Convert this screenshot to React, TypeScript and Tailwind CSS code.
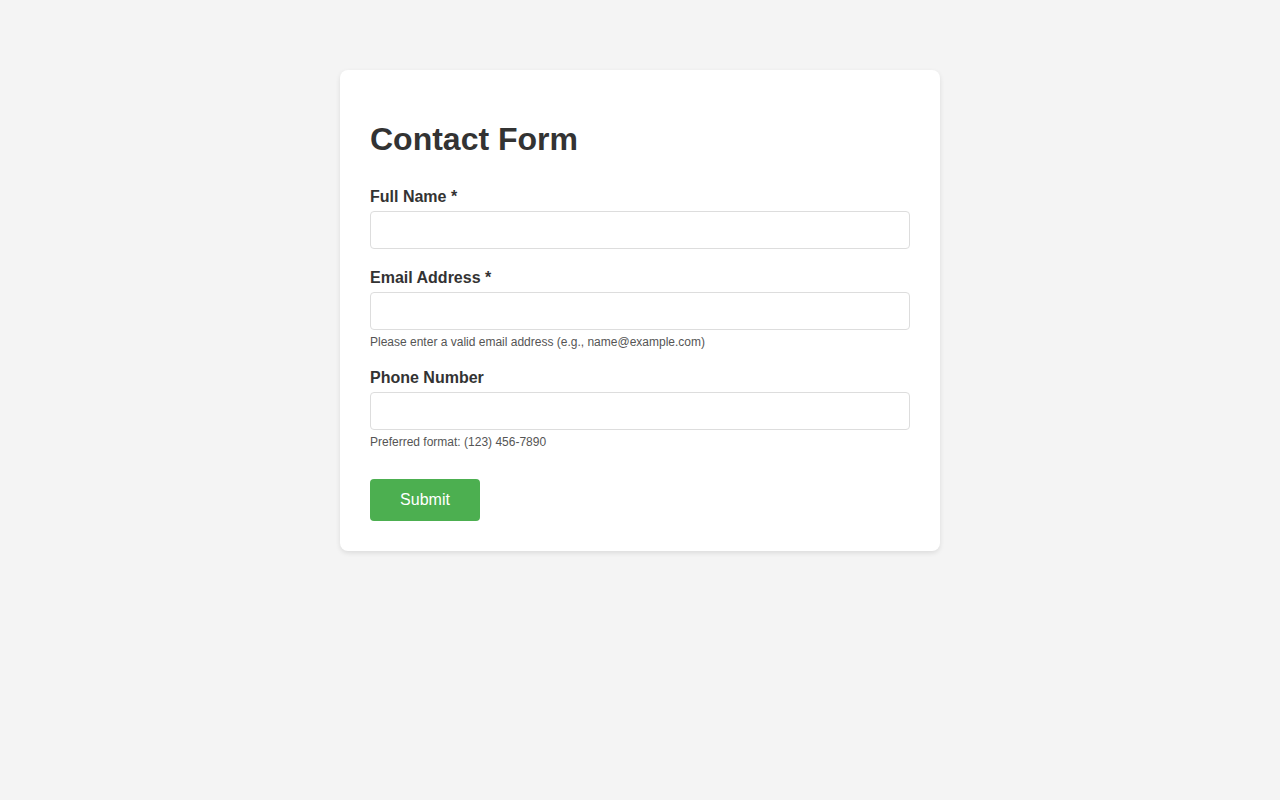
import React from "react";

type FieldProps = {
  id: string;
  label: string;
  type?: string;
  hint?: string;
};

function Field({ id, label, type = "text", hint }: FieldProps) {
  return (
    <div className="mb-[20px]">
      <label
        htmlFor={id}
        className="block mb-[5px] text-[16px] leading-[18px] font-bold text-[#333]"
      >
        {label}
      </label>
      <input
        id={id}
        type={type}
        className="block w-full h-[38px] px-[8px] border border-[#ddd] rounded-[4px] bg-white text-[16px] outline-none"
      />
      {hint && (
        <p className="mt-[5px] text-[12px] leading-[14px] text-[#555]">{hint}</p>
      )}
    </div>
  );
}

export default function App() {
  return (
    <div
      className="min-h-screen bg-[#f4f4f4] pt-[70px]"
      style={{ fontFamily: '"Liberation Sans", Arial, sans-serif' }}
    >
      <div className="w-[600px] mx-auto bg-white rounded-[8px] p-[30px] shadow-[0_2px_5px_rgba(0,0,0,0.1)]">
        <h1 className="mt-[21.4px] mb-[29.6px] text-[32px] leading-[37px] font-bold text-[#333]">
          Contact Form
        </h1>
        <form onSubmit={(e) => e.preventDefault()}>
          <Field id="name" label="Full Name *" />
          <Field
            id="email"
            label="Email Address *"
            type="email"
            hint="Please enter a valid email address (e.g., name@example.com)"
          />
          <Field
            id="phone"
            label="Phone Number"
            type="tel"
            hint="Preferred format: (123) 456-7890"
          />
          <button
            type="submit"
            className="mt-[10px] w-[110px] h-[42px] bg-[#4caf50] text-white text-[16px] rounded-[4px]"
          >
            Submit
          </button>
        </form>
      </div>
    </div>
  );
}
